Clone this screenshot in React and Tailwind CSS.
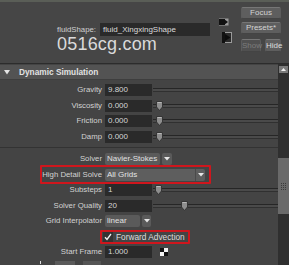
import React from 'react';

const thumbs = { Viscosity: 1, Friction: 1, Damp: 1 };

function DownTri({ color = '#e6e6e6' }) {
  return (
    <svg width="6" height="4" viewBox="0 0 6 4">
      <path d="M0 0 H6 L3 3.5 Z" fill={color} />
    </svg>
  );
}

function Thumb({ left }) {
  // little shield shaped slider handle
  return (
    <svg className="absolute top-1/2 -translate-y-1/2" style={{ left }} width="7" height="10" viewBox="0 0 7 10">
      <path d="M0.5 0.5 H6.5 V6 L3.5 9.5 L0.5 6 Z" fill="#8e8e8e" stroke="#353535" />
      <path d="M1.5 1.5 H5.5" stroke="#b8b8b8" />
    </svg>
  );
}

function Slider({ pos }) {
  return (
    <div className="relative flex-1 h-full flex items-center ml-[1px]">
      <div className="w-full h-[4px] border-t border-b border-t-[#262626] border-b-[#303030] bg-[#4a4a4a]" />
      {pos != null && <Thumb left={pos} />}
    </div>
  );
}

function Field({ value }) {
  return (
    <div className="w-[47px] h-[12px] shrink-0 bg-[#2a2a2a] text-[8px] leading-[12px] text-[#d6d6d6] pl-[3px]">
      {value}
    </div>
  );
}

function Row({ label, children, extra }) {
  return (
    <div className="relative flex items-center h-[15.5px]">
      <div className="w-[102px] shrink-0 text-right text-[7.8px] text-[#d2d2d2] whitespace-nowrap">{label}</div>
      <div className="ml-[3px] flex items-center flex-1 h-full">{children}</div>
      {extra}
    </div>
  );
}

function Btn({ children, className = '' }) {
  return (
    <div className={'h-[12px] rounded-[2px] border border-t-[#767676] border-x-[#5c5c5c] border-b-[#444] text-[8px] leading-[10px] text-center ' + className}>
      {children}
    </div>
  );
}

export default function App() {
  return (
    <div className="w-[289px] h-[265px] overflow-hidden bg-[#444] font-['Liberation_Sans',Arial,sans-serif] select-none">
      {/* attribute editor header */}
      <div className="h-[63px] flex border-t-2 border-[#5a5e57] bg-[#464646]">
        <div className="w-[217px] pl-[57px] pt-[21px]">
          <div className="flex items-center h-[13px]">
            <span className="text-[7.8px] text-[#d0d0d0]">fluidShape:</span>
            <div className="ml-[4px] w-[110px] h-[13px] bg-[#2a2a2a] text-[8px] leading-[13px] text-[#dcdcdc] pl-[3px]">
              fluid_XingxingShape
            </div>
          </div>
          <div className="text-[18px] leading-[18px] mt-[-1px] text-[#dadada] tracking-[0.2px]">0516cg.com</div>
        </div>
        <div className="w-[24px] pt-[16px] flex flex-col items-start pl-[2px]">
          <svg width="10" height="8" viewBox="0 0 10 8">
            <rect x="0" y="0.5" width="9.5" height="7" fill="#9a9a9a" />
            <rect x="0" y="1" width="6" height="6" fill="#111" />
            <path d="M5 1 L9 4 L5 7 Z" fill="#111" />
          </svg>
          <svg className="mt-[6px] ml-[3px]" width="10" height="11" viewBox="0 0 10 11">
            <rect x="0.5" y="0.5" width="9" height="10" fill="#2a2a2a" stroke="#9a9a9a" />
            <rect x="0" y="0" width="3" height="11" fill="#111" />
            <path d="M3 2 L8.5 5.5 L3 9 Z" fill="#0c0c0c" />
          </svg>
        </div>
        <div className="w-[40px] pt-[5px] flex flex-col">
          <Btn className="bg-[#5e5e5e] text-[#d4d4d4]">Focus</Btn>
          <Btn className="mt-[3px] bg-[#5e5e5e] text-[#d4d4d4]">Presets*</Btn>
          <div className="mt-[5px] flex gap-[4px]">
            <Btn className="w-[20px] h-[13px] leading-[11px] bg-[#505050] text-[#7c7c7c] border-t-[#5c5c5c]">Show</Btn>
            <Btn className="w-[16px] h-[13px] leading-[11px] bg-[#5e5e5e] text-[#dcdcdc]">Hide</Btn>
          </div>
        </div>
      </div>

      {/* scrolling attributes */}
      <div className="flex border-t border-[#2c2c2c] h-[202px]">
        <div className="w-[278px]">
          <div className="mt-[1px] h-[15px] bg-[#535353] border-b border-[#3e3e3e] flex items-center">
            <svg className="ml-[4px]" width="6" height="5" viewBox="0 0 6 5">
              <path d="M0 0 H6 L3 4.5 Z" fill="#e4e4e4" />
            </svg>
            <span className="ml-[9px] text-[8.3px] font-bold text-[#e2e2e2]">Dynamic Simulation</span>
          </div>

          <div className="pt-[2.5px]">
            {[
              ['Gravity', '9.800'],
              ['Viscosity', '0.000'],
              ['Friction', '0.000'],
              ['Damp', '0.000'],
            ].map(([label, value]) => (
              <Row key={label} label={label}>
                <Field value={value} />
                <Slider pos={thumbs[label] ? 3 : null} />
              </Row>
            ))}
          </div>

          <div className="mt-[2px] border-t border-[#333]" />

          <div className="pt-[4px]">
            <Row label="Solver">
              <div className="w-[55px] h-[12px] bg-[#5a5a5a] rounded-[2px] text-[8px] leading-[12px] text-[#e0e0e0] pl-[2px]">
                Navier-Stokes
              </div>
              <div className="ml-[2px] w-[10px] h-[12px] bg-[#5a5a5a] rounded-[2px] flex items-center justify-center">
                <DownTri />
              </div>
            </Row>
            <Row
              label="High Detail Solve"
              extra={<div className="absolute left-[40px] top-[-2.5px] w-[171px] h-[19px] border-2 border-[#cf161d] rounded-[1px]" />}
            >
              <div className="w-[100px] h-[12px] bg-[#5e5e5e] rounded-[2px] flex text-[8px] leading-[12px] text-[#e4e4e4]">
                <div className="flex-1 pl-[2px]">All Grids</div>
                <div className="w-[10px] border-l border-[#4a4a4a] flex items-center justify-center">
                  <DownTri />
                </div>
              </div>
            </Row>
            <Row label="Substeps">
              <Field value="1" />
              <Slider pos={2} />
            </Row>
            <Row label="Solver Quality">
              <Field value="20" />
              <Slider pos={28} />
            </Row>
            <Row label="Grid Interpolator">
              <div className="w-[35px] h-[12px] bg-[#5a5a5a] rounded-[2px] text-[8px] leading-[12px] text-[#e0e0e0] pl-[2px]">
                linear
              </div>
              <div className="ml-[2px] w-[9px] h-[12px] bg-[#5a5a5a] rounded-[2px] flex items-center justify-center">
                <DownTri />
              </div>
            </Row>
            <Row
              label=""
              extra={<div className="absolute left-[100px] top-[1px] w-[90px] h-[13.5px] border-2 border-[#cf161d] rounded-[1px]" />}
            >
              <div className="-ml-[2px] w-[10px] h-[10px] bg-[#333] flex items-center justify-center">
                <svg width="8" height="8" viewBox="0 0 8 8">
                  <path d="M1 4.2 L3 6.5 L7 1" stroke="#f2f2f2" strokeWidth="1.3" fill="none" />
                </svg>
              </div>
              <span className="ml-[3px] text-[8.3px] text-[#dedede]">Forward Advection</span>
            </Row>
            <Row label="Start Frame">
              <Field value="1.000" />
              <div className="ml-[8px] w-[8px] h-[8px] grid grid-cols-2">
                <div className="bg-[#111]" />
                <div className="bg-[#f2f2f2]" />
                <div className="bg-[#f2f2f2]" />
                <div className="bg-[#111]" />
              </div>
            </Row>
            <div className="flex items-start h-[6px] pt-[1px]">
              <div className="ml-[40px] w-[1px] h-[3px] bg-[#ddd]" />
              <div className="ml-[14px] w-[20px] h-[4px] bg-[#5a5a5a]" />
              <div className="ml-[8px] w-[18px] h-[4px] bg-[#555]" />
            </div>
          </div>
        </div>

        {/* scrollbar */}
        <div className="w-[11px] bg-[#2f2f2f] flex flex-col items-center">
          <div className="mt-[2px] w-[9px] h-[7px] bg-[#7a7a7a] flex items-center justify-center">
            <svg width="5" height="3" viewBox="0 0 5 3">
              <path d="M0 3 H5 L2.5 0 Z" fill="#f0f0f0" />
            </svg>
          </div>
          <div className="mt-[85px] w-[11px] h-[56px] bg-[#6a6a6a] flex items-center justify-center">
            <div className="grid grid-cols-3 gap-[1px]">
              {Array.from({ length: 12 }).map((_, i) => (
                <div key={i} className="w-[1px] h-[1px] bg-[#3c3c3c]" />
              ))}
            </div>
          </div>
        </div>
      </div>
    </div>
  );
}
